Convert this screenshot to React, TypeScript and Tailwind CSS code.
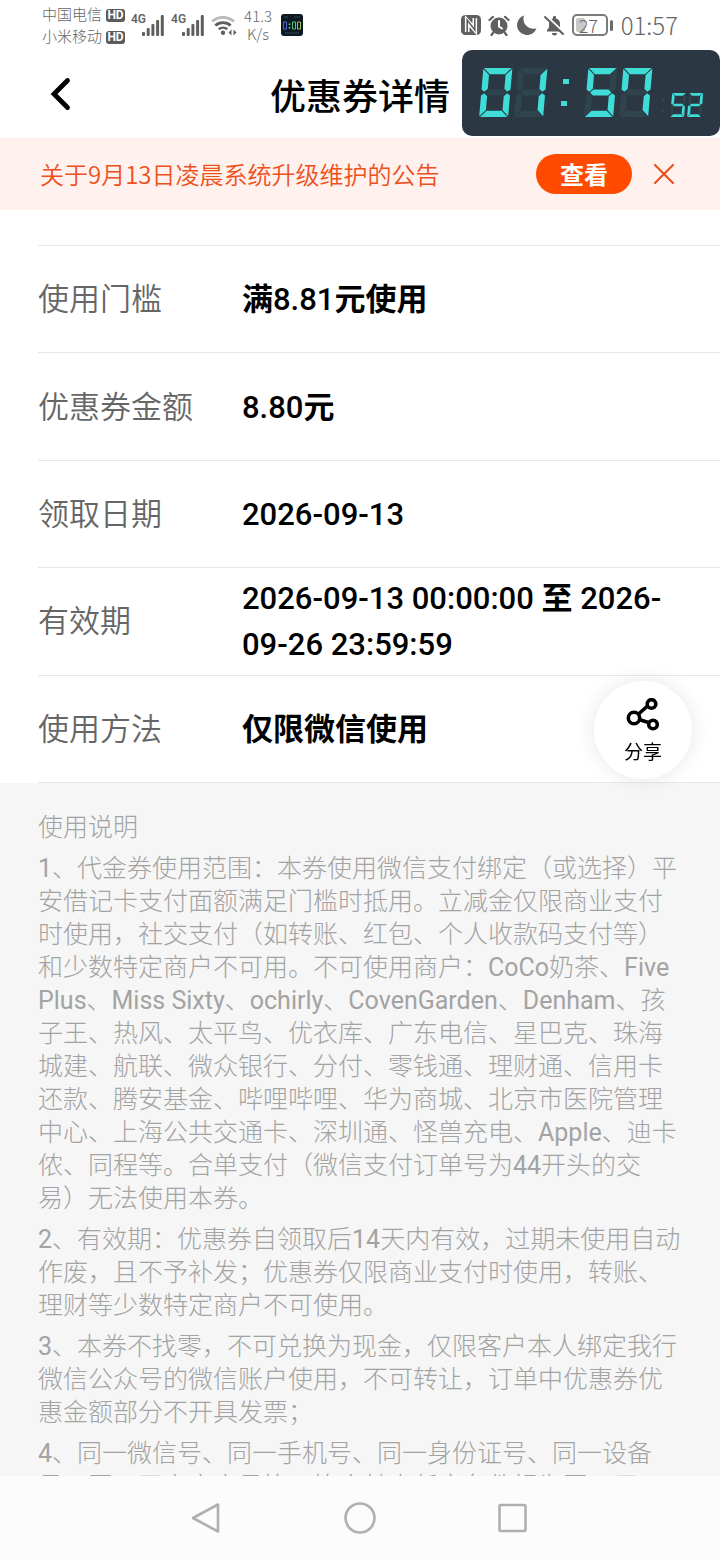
import { ReactNode } from "react";

const SEGMENTS: Record<string, string> = {
  "0": "abcdef",
  "1": "bc",
  "2": "abged",
  "5": "afgcd",
  "7": "fabc",
  "8": "abcdefg",
};

type DigitProps = { value: string; x: number; y: number; w: number; h: number; t: number };

function Digit({ value, x, y, w, h, t }: DigitProps) {
  const m = h / 2;
  const k = t / 2;
  const g = t * 0.12;
  const bars: Record<string, string> = {
    a: `${g},0 ${w - g},0 ${w - t - g},${t} ${t + g},${t}`,
    d: `${t + g},${h - t} ${w - t - g},${h - t} ${w - g},${h} ${g},${h}`,
    f: `0,${g} ${t},${t + g} ${t},${m - k - g} ${k},${m - g} 0,${m - k}`,
    b: `${w},${g} ${w - t},${t + g} ${w - t},${m - k - g} ${w - k},${m - g} ${w},${m - k}`,
    e: `0,${h - g} ${t},${h - t - g} ${t},${m + k + g} ${k},${m + g} 0,${m + k}`,
    c: `${w},${h - g} ${w - t},${h - t - g} ${w - t},${m + k + g} ${w - k},${m + g} ${w},${m + k}`,
    g: `${k + g},${m} ${t + g},${m - k} ${w - t - g},${m - k} ${w - k - g},${m} ${w - t - g},${m + k} ${t + g},${m + k}`,
  };
  const lit = SEGMENTS[value];
  const names = Object.keys(bars).sort((p, q) => Number(lit.includes(p)) - Number(lit.includes(q)));
  return (
    <g transform={`translate(${x + h * 0.09} ${y}) skewX(-5)`}>
      {names.map((name) => (
        <polygon key={name} points={bars[name]} fill={lit.includes(name) ? "#40dcd7" : "#2f444d"} />
      ))}
    </g>
  );
}

function FloatingClock() {
  return (
    <div className="absolute top-[50px] right-0 h-[86px] w-[258px] rounded-[10px] bg-[#2b3844]">
      <svg viewBox="0 0 258 86" className="block size-full" role="img" aria-label="01:57:52">
        <Digit value="0" x={17} y={18} w={29} h={49} t={6.2} />
        <Digit value="1" x={52} y={18} w={29} h={49} t={6.2} />
        <rect x="101" y="29" width="6" height="5" fill="#40dcd7" />
        <rect x="99" y="51" width="6" height="5" fill="#40dcd7" />
        <Digit value="5" x={122} y={18} w={29} h={49} t={6.2} />
        <Digit value="7" x={157} y={18} w={29} h={49} t={6.2} />
        <rect x="200" y="49" width="3" height="3" fill="#2f444d" />
        <rect x="199" y="59" width="3" height="3" fill="#2f444d" />
        <Digit value="5" x={208} y={43} w={14} h={24} t={2.7} />
        <Digit value="2" x={225} y={43} w={14} h={24} t={2.7} />
      </svg>
    </div>
  );
}

function Carrier({ name }: { name: string }) {
  return (
    <div className="flex h-[22px] items-center gap-1">
      <span className="text-[15px] leading-5">{name}</span>
      <span className="flex h-[13px] w-[19px] items-center justify-center rounded-[3px] bg-[#5b5b5b] text-[12px] leading-none font-bold text-white">
        HD
      </span>
    </div>
  );
}

function Signal() {
  return (
    <div className="flex h-6 items-start">
      <span className="font-[Roboto] text-[12px] leading-[14px] font-semibold">4G</span>
      <svg viewBox="0 0 22 21" className="-ml-1 mt-[3px] h-[21px] w-[22px]" fill="#5f5f5f" aria-hidden="true">
        <rect x="0" y="17" width="3" height="4" rx="1" />
        <rect x="4.7" y="13" width="3" height="8" rx="1" />
        <rect x="9.4" y="9" width="3" height="12" rx="1" />
        <rect x="14.1" y="5" width="3" height="16" rx="1" />
        <rect x="18.8" y="0" width="3" height="21" rx="1" />
      </svg>
    </div>
  );
}

function StatusBar() {
  return (
    <div className="flex h-[50px] shrink-0 items-start justify-between px-[42px] text-[#666]">
      <div className="flex items-start">
        <div className="flex flex-col pt-1">
          <Carrier name="中国电信" />
          <Carrier name="小米移动" />
        </div>
        <div className="mt-3 ml-[6px] flex gap-[7px]">
          <Signal />
          <Signal />
        </div>
        <svg viewBox="0 0 26 22" className="mt-[14px] ml-[7px] h-[22px] w-[26px]" fill="none" aria-hidden="true">
          <path d="M1 7.5a16.500 16.500 0 0 1 22 0" stroke="#b9b9b9" strokeWidth="2.800" />
          <path d="M4.300 11.500a11.500 11.500 0 0 1 15.400 0" stroke="#5f5f5f" strokeWidth="2.800" />
          <path d="M7.800 15.300a6.500 6.500 0 0 1 8.400 0" stroke="#5f5f5f" strokeWidth="2.600" />
          <circle cx="12" cy="18.800" r="2.200" fill="#5f5f5f" />
          <path d="M20.500 15.500v6l-3-3zM22.500 15.500v6l3-3z" fill="#5f5f5f" />
        </svg>
        <div className="mt-[7px] ml-[7px] flex flex-col items-center font-['Noto_Sans_CJK_SC_Light',sans-serif] text-[15px] leading-[18px]">
          <span>41.3</span>
          <span>K/s</span>
        </div>
        <svg viewBox="0 0 22 22" className="mt-[14px] ml-[9px] size-[22px]" aria-hidden="true">
          <rect width="22" height="22" rx="3" fill="#0e1820" />
          <path d="M3 3h4M13 3h6M4 19h14" stroke="#28475a" strokeWidth="1" />
          <path d="M2.500 8h3v7h-3z" stroke="#4b69d8" fill="none" />
          <path d="M8.500 9.500v1.500M8.500 13v1.500" stroke="#5fd8c2" strokeWidth="1.500" />
          <path d="M11.500 8h3v7h-3z" stroke="#48c77a" fill="none" />
          <path d="M16.500 8h3v7h-3z" stroke="#9bc94f" fill="none" />
        </svg>
      </div>
      <div className="flex h-[50px] items-center">
        <svg viewBox="0 0 20 20" className="size-5" aria-hidden="true">
          <rect width="20" height="20" rx="4.500" fill="#606060" />
          <path d="M6.200 17V6L13.800 14.500V3" stroke="#fff" strokeWidth="4.600" fill="none" />
          <path d="M6.200 20V5L13.800 15V0" stroke="#606060" strokeWidth="1.600" fill="none" />
        </svg>
        <svg viewBox="0 0 22 21" className="ml-[7px] h-[21px] w-[22px]" fill="none" stroke="#606060" strokeLinecap="round" aria-hidden="true">
          <circle cx="11" cy="11" r="8.500" fill="#606060" stroke="none" />
          <path d="M1.500 5L5 1.800M20.500 5L17 1.800M5 18l-1.500 2M17 18l1.500 2" strokeWidth="2.200" />
          <path d="M11 6v5.500l3 2" stroke="#fff" strokeWidth="2" />
        </svg>
        <svg viewBox="0 0 20 20" className="ml-[7px] size-5" aria-hidden="true">
          <path d="M7 .500a10 10 0 1 0 12.500 12.800A10 10 0 0 1 7 .500z" fill="#606060" />
        </svg>
        <svg viewBox="0 0 21 21" className="ml-[7px] size-[21px]" aria-hidden="true">
          <path d="M3 16.500V15l2-2.500V9a5.500 5.500 0 0 1 4-5.500V2.200a1.500 1.500 0 0 1 3 0v1.300A5.500 5.500 0 0 1 16 9v3.500l2 2.500v1.500zM8 18h5a2.500 2.500 0 0 1-5 0z" fill="#606060" />
          <path d="M2.500 1L20.500 18" stroke="#fff" strokeWidth="2" />
          <path d="M1 2L19 19" stroke="#606060" strokeWidth="2" strokeLinecap="round" />
        </svg>
        <div className="ml-[7px] flex items-center gap-[2px]">
          <div className="flex h-[22px] w-9 items-center rounded-[5px] border-2 border-[#7a7a7a] p-[2px]">
            <div className="flex h-full w-[9px] items-center rounded-[2px] bg-[#c8c8c8] pl-[3px] font-['Noto_Sans_CJK_SC_Light',sans-serif] text-[18px] leading-none whitespace-nowrap">
              27
            </div>
          </div>
          <div className="h-[11px] w-[3px] rounded-sm bg-[#6a6a6a]" />
        </div>
        <time className="ml-2 font-['Noto_Sans_CJK_SC_Light',sans-serif] text-[24px] leading-none">01:57</time>
      </div>
    </div>
  );
}

function Value({ text }: { text: string }) {
  return (
    <>
      {text.split(/([\u4e00-\u9fff]+)/).map((part, i) =>
        i % 2 === 1 ? (
          <b key={i} className="font-bold">
            {part}
          </b>
        ) : (
          part
        ),
      )}
    </>
  );
}

function Row({ label, children }: { label: string; children: ReactNode }) {
  return (
    <div className="flex flex-1 items-center border-b border-[#e8e8e8] pt-[2px]">
      <dt className="w-[204px] shrink-0 font-[Roboto,'Noto_Sans_CJK_SC_DemiLight','Noto_Sans_CJK_SC',sans-serif] text-[31px] leading-[46px] text-[#666]">
        {label}
      </dt>
      <dd className="pr-10 font-[Roboto,'Noto_Sans_CJK_SC',sans-serif] text-[31px] leading-[46px] font-medium text-black">
        {children}
      </dd>
    </div>
  );
}

const DETAILS = [
  { label: "使用门槛", value: "满8.81元使用" },
  { label: "优惠券金额", value: "8.80元" },
  { label: "领取日期", value: "2026-09-13" },
  { label: "有效期", value: "2026-09-13 00:00:00 至 2026-09-26 23:59:59" },
  { label: "使用方法", value: "仅限微信使用" },
];

const TERMS = [
  "1、代金券使用范围：本券使用微信支付绑定（或选择）平安借记卡支付面额满足门槛时抵用。立减金仅限商业支付时使用，社交支付（如转账、红包、个人收款码支付等）和少数特定商户不可用。不可使用商户：CoCo奶茶、Five Plus、Miss Sixty、ochirly、CovenGarden、Denham、孩子王、热风、太平鸟、优衣库、广东电信、星巴克、珠海城建、航联、微众银行、分付、零钱通、理财通、信用卡还款、腾安基金、哔哩哔哩、华为商城、北京市医院管理中心、上海公共交通卡、深圳通、怪兽充电、Apple、迪卡侬、同程等。合单支付（微信支付订单号为44开头的交易）无法使用本券。",
  "2、有效期：优惠券自领取后14天内有效，过期未使用自动作废，且不予补发；优惠券仅限商业支付时使用，转账、理财等少数特定商户不可使用。",
  "3、本券不找零，不可兑换为现金，仅限客户本人绑定我行微信公众号的微信账户使用，不可转让，订单中优惠券优惠金额部分不开具发票；",
  "4、同一微信号、同一手机号、同一身份证号、同一设备号、同一平安客户号等，符合其中任意条件视为同一用户。",
];

export default function App() {
  return (
    <div
      lang="zh-CN"
      className="relative flex h-screen min-h-[900px] flex-col overflow-hidden bg-white font-[Roboto,'Noto_Sans_CJK_SC_Light','Noto_Sans_CJK_SC',sans-serif]"
    >
      <StatusBar />

      <header className="grid h-[88px] shrink-0 grid-cols-[1fr_auto_1fr] items-center px-[46px]">
        <button type="button" aria-label="返回" className="w-8">
          <svg viewBox="0 0 32 36" className="h-9 w-8" fill="none" stroke="#000" strokeWidth="4.800" strokeLinecap="round" strokeLinejoin="miter" aria-hidden="true">
            <path d="M21.500 4.500L8 18L21.500 31.500" />
          </svg>
        </button>
        <h1 className="font-['Noto_Sans_CJK_SC',sans-serif] text-[36px] leading-[52px] font-medium text-black">优惠券详情</h1>
      </header>

      <FloatingClock />

      <section className="flex h-[72px] shrink-0 items-center bg-[#fff2ee] pr-[44px] pl-10">
        <p className="flex-1 font-['Noto_Sans_CJK_SC_DemiLight','Noto_Sans_CJK_SC',sans-serif] text-[24px] leading-9 text-[#ee501c]">
          关于9月13日凌晨系统升级维护的公告
        </p>
        <button type="button" className="h-10 w-24 rounded-full bg-[#ff4b00] font-['Noto_Sans_CJK_SC',sans-serif] text-[24px] leading-10 font-bold text-white">
          查看
        </button>
        <button type="button" aria-label="关闭" className="ml-5 size-6">
          <svg viewBox="0 0 24 24" className="size-6" fill="none" stroke="#e8511f" strokeWidth="2.200" strokeLinecap="round" aria-hidden="true">
            <path d="M3 3L21 21M21 3L3 21" />
          </svg>
        </button>
      </section>

      <dl className="mt-[35px] ml-[38px] flex min-h-[538px] shrink-0 flex-col border-t border-[#e8e8e8]">
        {DETAILS.map(({ label, value }) => (
          <Row key={label} label={label}>
            <Value text={value} />
          </Row>
        ))}
      </dl>

      <button
        type="button"
        className="absolute top-[681px] right-7 flex size-[98px] flex-col items-center rounded-full bg-white pt-[17px] text-black shadow-[0_0_20px_rgba(0,0,0,0.1)]"
      >
        <svg viewBox="0 0 34 34" className="size-[34px]" fill="none" stroke="#000" strokeWidth="3.600" aria-hidden="true">
          <path d="M12 16.500L21.500 8M13 21.500L22.500 24.500" />
          <circle cx="8" cy="20" r="5.700" />
          <circle cx="25.500" cy="6" r="4.300" />
          <circle cx="27" cy="26.500" r="4.300" />
        </svg>
        <span className="mt-[5px] font-['Noto_Sans_CJK_SC',sans-serif] text-[19px] leading-7">分享</span>
      </button>

      <section className="flex min-h-0 flex-1 flex-col gap-2 overflow-y-auto bg-[#f6f6f6] px-[38px] pt-7 text-[25px] leading-[33px] text-[#a3a3a3] [scrollbar-width:none] [text-spacing-trim:space-all]">
        <h2>使用说明</h2>
        {TERMS.map((term) => (
          <p key={term}>{term}</p>
        ))}
      </section>

      <nav className="flex h-[84px] shrink-0 items-center justify-center gap-[118px] bg-[#fcfcfc]">
        <button type="button" aria-label="后退">
          <svg viewBox="0 0 36 36" className="size-9" fill="none" stroke="#b0b0b0" strokeWidth="2.600" strokeLinejoin="round" aria-hidden="true">
            <path d="M30 4.500V31.500L5 18z" />
          </svg>
        </button>
        <button type="button" aria-label="主页">
          <svg viewBox="0 0 36 36" className="size-9" fill="none" stroke="#b0b0b0" strokeWidth="2.600" aria-hidden="true">
            <circle cx="18" cy="18" r="14.500" />
          </svg>
        </button>
        <button type="button" aria-label="最近任务">
          <svg viewBox="0 0 36 36" className="size-9" fill="none" stroke="#b0b0b0" strokeWidth="2.600" aria-hidden="true">
            <rect x="3.500" y="5" width="26" height="26" rx="1" />
          </svg>
        </button>
      </nav>
    </div>
  );
}
